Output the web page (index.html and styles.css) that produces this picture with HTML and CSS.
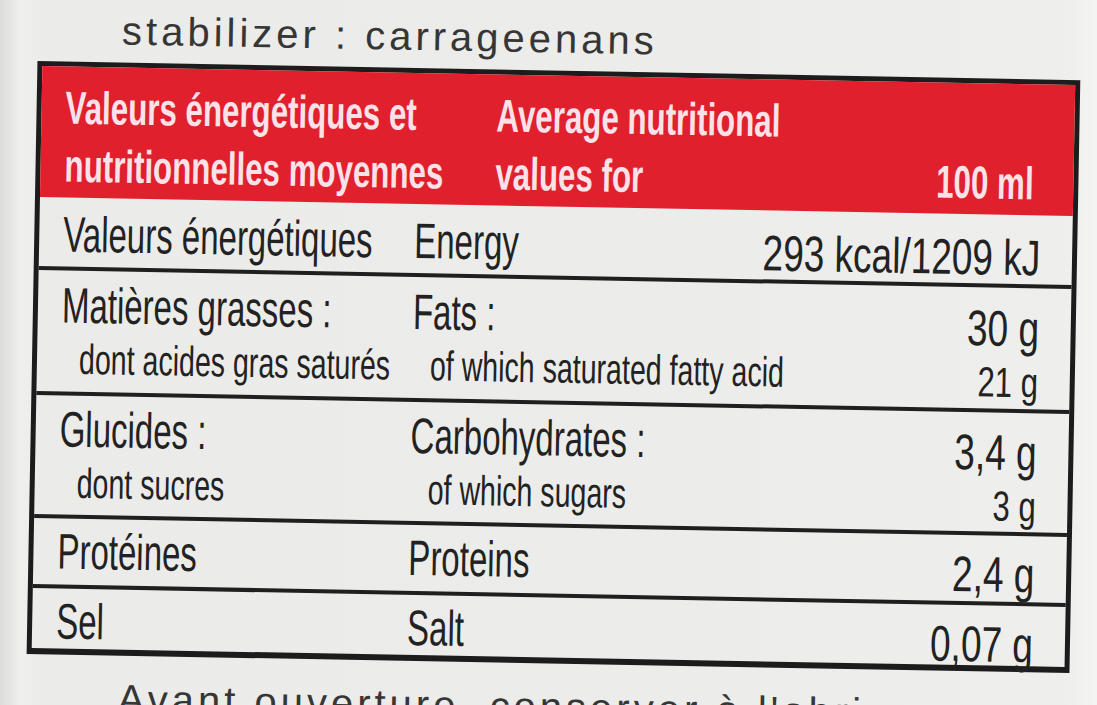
FILE: index.html
```html
<!DOCTYPE html>
<html lang="fr">
<head>
<meta charset="utf-8">
<title>Valeurs nutritionnelles</title>
<link rel="stylesheet" href="styles.css">
</head>
<body>
<div class="page">
  <p class="intro">stabilizer : carrageenans</p>
  <div class="panel">
    <div class="head">
      <div class="hcell">
        <span class="hx">Valeurs énergétiques et</span>
        <span class="hx">nutritionnelles moyennes</span>
      </div>
      <div class="hcell">
        <span class="hx">Average nutritional</span>
        <span class="hx">values for</span>
      </div>
      <div class="hcell hval">
        <span class="hx">&nbsp;</span>
        <span class="hx">100 ml</span>
      </div>
    </div>

    <div class="row energy">
      <div class="cell"><span class="m">Valeurs énergétiques</span></div>
      <div class="cell"><span class="m">Energy</span></div>
      <div class="cell val"><span class="m">293 kcal/1209 kJ</span></div>
    </div>

    <div class="row fats">
      <div class="cell">
        <span class="m">Matières grasses :</span>
        <span class="s">dont acides gras saturés</span>
      </div>
      <div class="cell">
        <span class="m">Fats :</span>
        <span class="s">of which saturated fatty acid</span>
      </div>
      <div class="cell val">
        <span class="m">30 g</span>
        <span class="s">21 g</span>
      </div>
    </div>

    <div class="row carbs">
      <div class="cell">
        <span class="m">Glucides :</span>
        <span class="s">dont sucres</span>
      </div>
      <div class="cell">
        <span class="m">Carbohydrates :</span>
        <span class="s">of which sugars</span>
      </div>
      <div class="cell val">
        <span class="m">3,4 g</span>
        <span class="s">3 g</span>
      </div>
    </div>

    <div class="row proteins">
      <div class="cell"><span class="m">Protéines</span></div>
      <div class="cell"><span class="m">Proteins</span></div>
      <div class="cell val"><span class="m">2,4 g</span></div>
    </div>

    <div class="row salt">
      <div class="cell"><span class="m">Sel</span></div>
      <div class="cell"><span class="m">Salt</span></div>
      <div class="cell val"><span class="m">0,07 g</span></div>
    </div>
  </div>
  <p class="after">Avant ouverture, conserver à l'abri</p>
</div>
</body>
</html>
```

FILE: styles.css
```css
html, body {
  margin: 0;
  height: 705px;
  overflow: hidden;
}

body {
  background: linear-gradient(to right, #dcdcda 0, #efefed 20px, #ebebe9 45px, #ececea 60%, #eeeeec 97%, #f4f4f2 100%);
  font-family: "Liberation Sans", Arial, sans-serif;
  color: #222222;
}

.page {
  transform: rotate(1.05deg);
  transform-origin: 33px 360px;
}

.intro {
  margin: 0;
  height: 61px;
  box-sizing: border-box;
  padding: 5px 0 0 116px;
  font-size: 40px;
  line-height: 48px;
  letter-spacing: 4px;
  color: #363636;
  white-space: nowrap;
}

.panel {
  margin-left: 32px;
  width: 1043px;
  box-sizing: border-box;
  border: 5px solid #1c1c1c;
  border-bottom-width: 6px;
}

.head {
  height: 131px;
  box-sizing: border-box;
  background: #e1202d;
  color: #fbe2e9;
  display: grid;
  grid-template-columns: 431px minmax(0, 1fr) auto;
  padding: 12px 40px 0 24px;
  font-weight: bold;
  font-size: 46px;
  line-height: 58px;
}

.hx {
  display: block;
  white-space: nowrap;
  transform: scaleX(0.68);
  transform-origin: left center;
}

.hval .hx {
  text-align: right;
  transform-origin: right center;
}

.row {
  display: grid;
  grid-template-columns: 351px minmax(0, 1fr) auto;
  padding: 7px 32px 0 24px;
  border-top: 4px solid #1f1f1f;
}

.row.energy {
  border-top: 0;
  padding-top: 10px;
  height: 59px;
}

.row.fats {
  padding-top: 8px;
  height: 113px;
}

.row.carbs {
  padding-top: 7px;
  height: 112px;
}

.row.proteins {
  padding-top: 6px;
  height: 60px;
}

.row.salt {
  padding-top: 6px;
  height: 54px;
}

.m {
  display: block;
  white-space: nowrap;
  font-size: 50px;
  line-height: 54px;
  transform: scaleX(0.66);
  transform-origin: left center;
}

.s {
  display: block;
  white-space: nowrap;
  margin-left: 18px;
  font-size: 42px;
  line-height: 53px;
  transform: scaleX(0.68);
  transform-origin: left center;
}

.val {
  padding-top: 6px;
  text-align: right;
}

.val .m,
.val .s {
  margin-left: 0;
  transform: scaleX(0.74);
  transform-origin: right center;
}

.after {
  margin: 19px 0 0;
  padding-left: 124px;
  font-size: 40px;
  line-height: 48px;
  letter-spacing: 4px;
  color: #363636;
  white-space: nowrap;
}
```
